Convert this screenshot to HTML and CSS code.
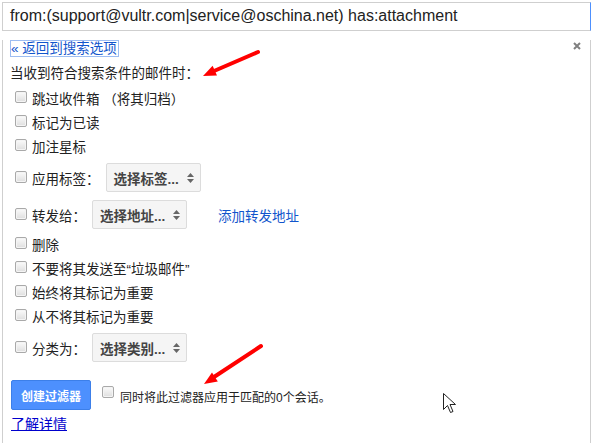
FILE: index.html
```html
<!DOCTYPE html>
<html lang="zh-CN">
<head>
<meta charset="utf-8">
<title>创建过滤器</title>
<link rel="stylesheet" href="styles.css">
</head>
<body>
<div class="frame">
  <div class="search">from:(support@vultr.com|service@oschina.net) has:attachment</div>
  <div class="panel">
    <div class="top">
      <a class="back" href="#">« 返回到搜索选项</a>
      <svg class="close" width="8" height="8" viewBox="0 0 8 8"><path d="M1 1L7 7M7 1L1 7" stroke="#808080" stroke-width="2"/></svg>
    </div>
    <div class="heading">当收到符合搜索条件的邮件时：</div>
    <div class="row"><span class="cb"></span><span>跳过收件箱 （将其归档）</span></div>
    <div class="row"><span class="cb"></span><span>标记为已读</span></div>
    <div class="row"><span class="cb"></span><span>加注星标</span></div>
    <div class="row sel-row first-sel"><span class="cb"></span><span>应用标签：</span>
      <span class="select wide">选择标签...<svg class="arrows" width="7" height="10" viewBox="0 0 7 10"><path d="M3.5 0L7 4H0Z M0 6H7L3.5 10Z" fill="#666"/></svg></span>
    </div>
    <div class="row sel-row second-sel"><span class="cb"></span><span>转发给：</span>
      <span class="select">选择地址...<svg class="arrows" width="7" height="10" viewBox="0 0 7 10"><path d="M3.5 0L7 4H0Z M0 6H7L3.5 10Z" fill="#666"/></svg></span>
      <a class="add" href="#">添加转发地址</a>
    </div>
    <div class="row after-sel"><span class="cb"></span><span>删除</span></div>
    <div class="row"><span class="cb"></span><span>不要将其发送至“垃圾邮件”</span></div>
    <div class="row"><span class="cb"></span><span>始终将其标记为重要</span></div>
    <div class="row"><span class="cb"></span><span>从不将其标记为重要</span></div>
    <div class="row sel-row first-sel"><span class="cb"></span><span>分类为：</span>
      <span class="select">选择类别...<svg class="arrows" width="7" height="10" viewBox="0 0 7 10"><path d="M3.5 0L7 4H0Z M0 6H7L3.5 10Z" fill="#666"/></svg></span>
    </div>
    <div class="actions">
      <span class="btn">创建过滤器</span>
      <span class="cb small"></span>
      <span class="apply">同时将此过滤器应用于匹配的0个会话。</span>
    </div>
    <a class="learn" href="#">了解详情</a>
  </div>
</div>
<svg class="overlay" width="592" height="443" viewBox="0 0 592 443">
  <line x1="258" y1="52" x2="214" y2="71" stroke="#f00" stroke-width="4" stroke-linecap="round"/>
  <path d="M203 76L217 75.6L212.6 65.8Z" fill="#f00"/>
  <line x1="261" y1="346" x2="214" y2="377" stroke="#f00" stroke-width="4" stroke-linecap="round"/>
  <path d="M204 384L217.8 381.4L212 372.4Z" fill="#f00"/>
  <path d="M443.5 393.5V409.5L447.5 405.5L450.5 412.5L453 411.5L450 404.5H455.5Z" fill="#fff" stroke="#222" stroke-width="1" stroke-linejoin="round"/>
</svg>
</body>
</html>
```
FILE: styles.css
```css
html, body {
  margin: 0;
  padding: 0;
  background: #fff;
}
body {
  font-family: "Liberation Sans", Arial, "Noto Sans CJK SC", sans-serif;
  color: #222;
  width: 592px;
  height: 443px;
  overflow: hidden;
  position: relative;
}
.frame {
  margin-left: 2px;
  width: 589px;
  padding-top: 2px;
}
.search {
  box-sizing: border-box;
  height: 29px;
  border: 1px solid #cfcfcf;
  border-right-color: #4d90fe;
  padding-left: 7px;
  font-size: 16px;
  line-height: 26px;
  color: #222;
  white-space: nowrap;
}
.panel {
  box-sizing: border-box;
  border-left: 1px solid #cfcfcf;
  border-right: 1px solid #cfcfcf;
  padding: 0 9px 0 7px;
  height: 420px;
  font-size: 13.5px;
  font-family: "Liberation Sans", Arial, "Noto Sans CJK SC", sans-serif;
}
.top {
  margin-top: 9px;
  height: 17px;
  display: flex;
  justify-content: space-between;
  align-items: flex-start;
}
.back {
  box-sizing: border-box;
  height: 17px;
  line-height: 15px;
  border: 1px solid #9dbdf2;
  padding: 0 1px 0 0;
  color: #15c;
  text-decoration: none;
  white-space: nowrap;
}
.close {
  margin-top: 2px;
  margin-right: 0;
}
.heading {
  margin-top: 5px;
  height: 24px;
  line-height: 24px;
}
.row {
  height: 24px;
  display: flex;
  align-items: center;
  white-space: nowrap;
}
.cb {
  box-sizing: border-box;
  width: 12px;
  height: 12px;
  margin: -2px 5px 0 5px;
  border: 1px solid #a9a9a9;
  border-radius: 2px;
  background: linear-gradient(#fbfbfb, #dedede);
  box-shadow: inset 0 0 0 1px #f4f4f4;
  flex: none;
}
.sel-row {
  height: 29px;
}
.first-sel {
  margin-top: 5px;
}
.second-sel {
  margin-top: 8px;
}
.after-sel {
  margin-top: 3px;
}
.select {
  box-sizing: border-box;
  height: 29px;
  width: 95px;
  margin-left: 6px;
  padding: 0 6px 0 7px;
  display: flex;
  align-items: center;
  justify-content: space-between;
  background: #f5f5f5;
  border: 1px solid #dcdcdc;
  border-radius: 2px;
  font-weight: bold;
  color: #444;
}
.add {
  margin-left: 31px;
  color: #15c;
  text-decoration: none;
}
.actions {
  margin-top: 18px;
  height: 30px;
  display: flex;
  align-items: center;
  white-space: nowrap;
}
.btn {
  box-sizing: border-box;
  width: 80px;
  height: 30px;
  margin-left: 1px;
  display: flex;
  align-items: center;
  justify-content: center;
  background: #4d90fe;
  border: 1px solid #3c7fe9;
  border-radius: 2px;
  color: #fff;
  font-weight: bold;
  font-size: 12px;
}
.cb.small {
  margin: -6px 6px 0 11px;
}
.apply {
  font-size: 12px;
  margin-top: 2px;
}
.learn {
  display: inline-block;
  margin-top: 6px;
  margin-left: 1px;
  height: 16px;
  line-height: 16px;
  font-size: 14px;
  color: #00c;
  text-decoration: underline;
}
.overlay {
  position: absolute;
  left: 0;
  top: 0;
  pointer-events: none;
}
```
